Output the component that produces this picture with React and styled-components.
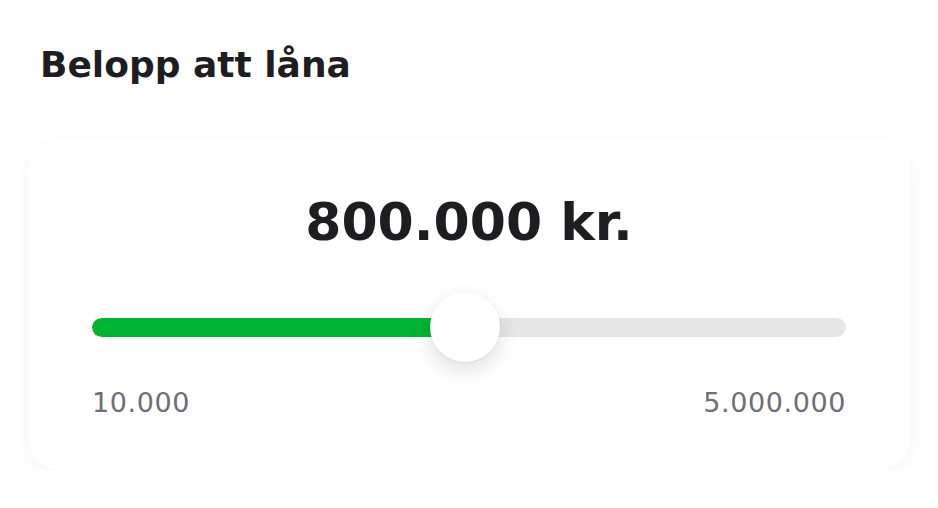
import React from 'react';
import styled, { createGlobalStyle } from 'styled-components';

const GlobalStyle = createGlobalStyle`
    body {
        margin: 0;
        background: #ffffff;
        font-family: 'DejaVu Sans', Inter, sans-serif;
        color: #1d1d22;
    }
`;

const Page = styled.div`
    padding: 43px 28px 0 28px;
    width: 882px;
`;

const Heading = styled.h2`
    margin: 0 0 53px 12px;
    font-size: 36px;
    line-height: 44px;
    font-weight: 700;
`;

const Card = styled.div`
    background: #fff;
    border-radius: 32px;
    box-shadow: 0 4px 24px rgba(0, 0, 0, 0.045);
    padding: 48px 64px 52px;
    display: flex;
    flex-direction: column;
`;

const Amount = styled.div`
    text-align: center;
    font-size: 52px;
    line-height: 68px;
    font-weight: 700;
    margin-bottom: 36px;
`;

const SliderRoot = styled.div`
    position: relative;
    height: 70px;
    display: flex;
    align-items: center;
`;

const Track = styled.div`
    width: 100%;
    height: 19px;
    border-radius: 10px;
    background: #e6e6e6;
    overflow: hidden;
`;

const Range = styled.div`
    height: 100%;
    background: #00b533;
    border-radius: 10px;
`;

// thumb ligger över spåret
const Thumb = styled.div`
    position: absolute;
    top: 0;
    width: 70px;
    height: 70px;
    margin-left: -35px;
    border-radius: 50%;
    background: #fff;
    box-shadow: 0 8px 22px rgba(0, 0, 0, 0.13), 0 1px 3px rgba(0, 0, 0, 0.05);
`;

const Limits = styled.div`
    display: flex;
    justify-content: space-between;
    margin-top: 26px;
    font-size: 27px;
    line-height: 30px;
    letter-spacing: 0.6px;
    color: #6e6e73;
`;

const App = () => {
    const percent = 49.5;

    return (
        <Page>
            <GlobalStyle />
            <Heading>Belopp att låna</Heading>
            <Card>
                <Amount>800.000 kr.</Amount>
                <SliderRoot>
                    <Track>
                        <Range style={{ width: `${percent}%` }} />
                    </Track>
                    <Thumb style={{ left: `${percent}%` }} />
                </SliderRoot>
                <Limits>
                    <span>10.000</span>
                    <span>5.000.000</span>
                </Limits>
            </Card>
        </Page>
    );
};

export default App;
